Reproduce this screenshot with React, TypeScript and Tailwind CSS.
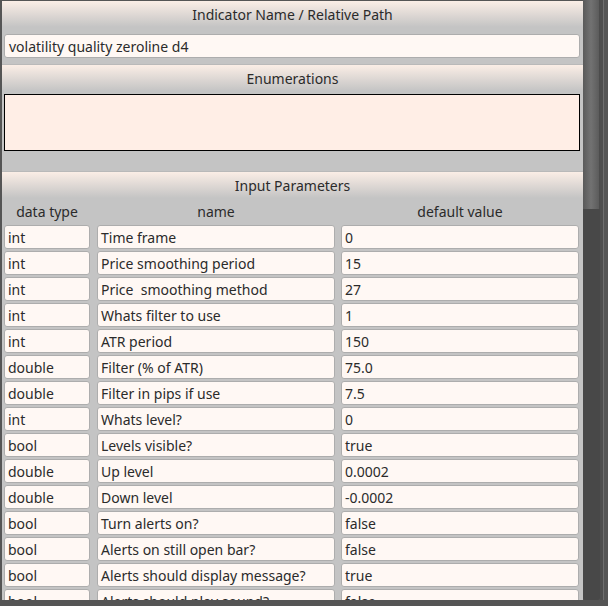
import React from 'react';

const rows: [string, string, string][] = [
  ['int', 'Time frame', '0'],
  ['int', 'Price smoothing period', '15'],
  ['int', 'Price  smoothing method', '27'],
  ['int', 'Whats filter to use', '1'],
  ['int', 'ATR period', '150'],
  ['double', 'Filter (% of ATR)', '75.0'],
  ['double', 'Filter in pips if use', '7.5'],
  ['int', 'Whats level?', '0'],
  ['bool', 'Levels visible?', 'true'],
  ['double', 'Up level', '0.0002'],
  ['double', 'Down level', '-0.0002'],
  ['bool', 'Turn alerts on?', 'false'],
  ['bool', 'Alerts on still open bar?', 'false'],
  ['bool', 'Alerts should display message?', 'true'],
  ['bool', 'Alerts should play sound?', 'false'],
];

function Header({ title }: { title: string }) {
  return (
    <div className="h-[27px] flex items-center justify-center border-t border-[#b9b9b9] bg-gradient-to-b from-[#fbeee6] to-[#c4c4c4] shrink-0">
      {title}
    </div>
  );
}

function Cell({ text, w, className = '' }: { text: string; w: string; className?: string }) {
  return (
    <div className={`${w} ${className} h-[24px] flex items-center pt-[1px] px-[3px] bg-[#fff8f4] border border-[#adadad] rounded-[3px] whitespace-pre overflow-hidden`}>
      {text}
    </div>
  );
}

export default function App() {
  return (
    <div
      className="w-[608px] h-[606px] bg-[#555555] flex pt-[1px] pl-[2px] pb-[6px] overflow-hidden text-[14px] text-[#2b2b2b]"
      style={{ fontFamily: '"Noto Sans", "Open Sans", sans-serif' }}
    >
      {/* main panel */}
      <div className="w-[581px] h-[599px] bg-[#c4c4c4] flex flex-col overflow-hidden">
        <div className="h-[26px] flex items-center justify-center bg-gradient-to-b from-[#fbeee6] to-[#c4c4c4] shrink-0">
          Indicator Name / Relative Path
        </div>
        <div className="px-[2px] mt-[7px] mb-[6px]">
          <Cell text="volatility quality zeroline d4" w="w-[576px]" className="px-[4px]" />
        </div>

        <Header title="Enumerations" />
        <div className="px-[2px] mt-[3px]">
          <div className="w-[576px] h-[57px] bg-[#ffeee6] border border-black" />
        </div>
        <div className="h-[20px] shrink-0" />

        <Header title="Input Parameters" />
        <div className="flex pl-[2px] h-[26px] pt-[1px] items-center shrink-0">
          <div className="w-[86px] text-center">data type</div>
          <div className="w-[238px] ml-[7px] text-center">name</div>
          <div className="w-[238px] ml-[6px] text-center">default value</div>
        </div>
        <div className="flex flex-col gap-[2px] pl-[2px] mt-[1px]">
          {rows.map(([t, n, v], i) => (
            <div key={i} className="flex">
              <Cell text={t} w="w-[86px]" />
              <Cell text={n} w="w-[238px]" className="ml-[7px]" />
              <Cell text={v} w="w-[238px]" className="ml-[6px]" />
            </div>
          ))}
        </div>
      </div>

      {/* scrollbar */}
      <div className="w-[17px] h-[600px] -mt-[1px] flex flex-col bg-[#484848] rounded-b-[2px] overflow-hidden">
        <div className="h-[209px] bg-gradient-to-r from-[#5a5a5a] via-[#727272] to-[#5c5c5c] border-r border-[#4c4c4c]" />
      </div>

      {/* right edge */}
      <div className="w-[8px] h-[600px] -mt-[1px] flex">
        <div className="w-[3px] bg-[#4e4e4e]" />
        <div className="w-[1px] bg-[#6e6e6e]" />
        <div className="flex-1 bg-[#555555]" />
      </div>
    </div>
  );
}
